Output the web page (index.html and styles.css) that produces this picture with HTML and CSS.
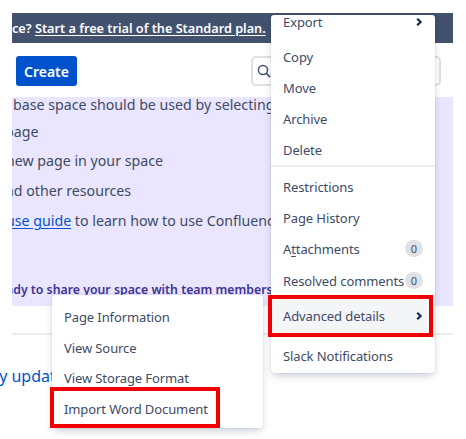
FILE: index.html
```html
<!DOCTYPE html>
<html>
<head>
<meta charset="utf-8">
<link rel="stylesheet" href="styles.css">
</head>
<body>
<div class="page">
  <div class="banner"><span class="cut">ce? </span><a class="trial">Start a free trial of the Standard plan.</a></div>
  <div class="toolbar">
    <button class="create">Create</button>
    <div class="search">
      <svg width="14" height="14" viewBox="0 0 14 14"><circle cx="6" cy="6" r="4.6" fill="none" stroke="#42526E" stroke-width="1.5"/><path d="M9.4 9.4 L12.6 12.6" stroke="#42526E" stroke-width="1.6" stroke-linecap="round"/></svg>
    </div>
  </div>
  <div class="panel">
    <p class="line l1">base space should be used by selecting the space settings</p>
    <p class="line l2">page</p>
    <p class="line l3">new page in your space</p>
    <p class="line l4">nd other resources</p>
    <p class="line l5"><a class="link">use guide</a> to learn how to use Confluence</p>
    <p class="line l6">ady to share your space with team members.</p>
  </div>
  <div class="divider"></div>
  <div class="recent"><span class="recent-text">ly updated</span></div>
</div>

<div class="menu main-menu">
  <div class="item first">Export<svg class="chev" width="8" height="10" viewBox="0 0 8 10"><path d="M2.2 1.8 L5.6 5 L2.2 8.2" fill="none" stroke="#172B4D" stroke-width="2.2"/></svg></div>
  <div class="group g1">
    <div class="item">Copy</div>
    <div class="item">Move</div>
    <div class="item">Archive</div>
    <div class="item">Delete</div>
  </div>
  <div class="group sep">
    <div class="item">Restrictions</div>
    <div class="item">Page History</div>
    <div class="item">A<u class="acc">t</u>tachments<span class="badge">0</span></div>
    <div class="item tall">Resolved comments<span class="badge">0</span></div>
    <div class="item adv">Advanced details<svg class="chev" width="8" height="10" viewBox="0 0 8 10"><path d="M2.2 1.8 L5.6 5 L2.2 8.2" fill="none" stroke="#172B4D" stroke-width="2.2"/></svg></div>
  </div>
  <div class="group sep last">
    <div class="item">Slack Notifications</div>
  </div>
</div>

<div class="menu sub-menu">
  <div class="item">Page Information</div>
  <div class="item">View Source</div>
  <div class="item">View Storage Format</div>
  <div class="item">Import Word Document</div>
</div>

<div class="mark mark-adv"></div>
<div class="mark mark-imp"></div>
</body>
</html>
```
FILE: styles.css
```css
* { box-sizing: border-box; }
html, body { margin: 0; padding: 0; background: #fff; }
body {
  width: 466px;
  height: 439px;
  overflow: hidden;
  position: relative;
  font-family: "Noto Sans", "Open Sans", sans-serif;
  color: #42526E;
}
.page { padding-top: 13px; }
.banner {
  margin-left: 12px;
  width: 441px;
  height: 30px;
  background: #42526E;
  color: #fff;
  font-size: 12.7px;
  font-weight: 600;
  line-height: 30px;
  white-space: nowrap;
  overflow: hidden;
}
.trial { text-decoration: underline; text-underline-offset: 2px; }
.toolbar {
  margin-left: 12px;
  width: 441px;
  height: 54px;
  display: flex;
  align-items: flex-start;
  padding-top: 13px;
}
.create {
  margin-left: 4px;
  width: 61px;
  height: 30px;
  border: 0;
  border-radius: 3px;
  background: #0052CC;
  color: #fff;
  font-family: inherit;
  font-size: 14px;
  font-weight: 600;
  padding: 0;
}
.search {
  margin-left: auto;
  margin-right: 12px;
  width: 190px;
  height: 30px;
  border: 2px solid #DFE1E6;
  border-radius: 5px;
  display: flex;
  align-items: center;
  padding-left: 4px;
}
.panel {
  margin-left: 12px;
  width: 441px;
  height: 209px;
  background: #EAE6FF;
  overflow: hidden;
  color: #3D4B66;
  font-size: 14.2px;
}
.line {
  margin: 0;
  line-height: 29px;
  white-space: nowrap;
}
.l1 { margin-top: -7px; text-indent: 1px; }
.l2 { text-indent: -7px; margin-top: -2px; }
.l3 { text-indent: -6px; }
.l4 { text-indent: -7px; margin-top: 1px; }
.l5 { text-indent: -6px; margin-top: 1px; }
.link { color: #0052CC; text-decoration: underline; text-underline-offset: 2px; }
.l6 {
  margin-top: 40px;
  text-indent: -6px;
  color: #403294;
  font-weight: 600;
  font-size: 12.3px;
}
.divider {
  margin-left: 12px;
  margin-top: 27px;
  width: 441px;
  height: 2px;
  background: #EBECF0;
}
.recent {
  margin-top: 31px;
  height: 20px;
  line-height: 20px;
  font-size: 16px;
  color: #0052CC;
  white-space: nowrap;
  overflow: hidden;
  text-indent: -5px;
}

.menu {
  position: absolute;
  background: #fff;
  border-radius: 3px;
  box-shadow: 0 4px 8px -2px rgba(9, 30, 66, 0.25), 0 0 1px rgba(9, 30, 66, 0.31);
  overflow: hidden;
  font-size: 13px;
  letter-spacing: -0.1px;
  color: #3D4B66;
}
.main-menu { left: 271px; top: 15px; width: 164px; height: 358px; }
.sub-menu { left: 52px; top: 295px; width: 211px; height: 133px; padding-top: 7px; }
.item {
  height: 31px;
  display: flex;
  align-items: center;
  padding: 0 12px 0 12px;
  white-space: nowrap;
}
.sub-menu .item { height: 30.5px; }
.item.first { margin-top: -8px; height: 30px; }
.g1 { margin-top: 4px; }
.sep { border-top: 2px solid #EBECF0; padding-top: 4px; }
.item.tall { height: 33px; }
.item.adv { height: 37px; background: #F4F5F7; }
.chev { margin-left: auto; }
.acc { text-decoration: underline; text-underline-offset: 2px; }
.badge {
  margin-left: auto;
  width: 18px;
  height: 17px;
  border-radius: 9px;
  background: #DFE1E6;
  font-size: 11px;
  line-height: 17px;
  text-align: center;
  letter-spacing: 0;
  color: #42526E;
}
.mark {
  position: absolute;
  border: 4px solid #F20000;
}
.mark-adv { left: 268px; top: 295px; width: 165px; height: 42px; }
.mark-imp { left: 50px; top: 387px; width: 170px; height: 41px; }
```
